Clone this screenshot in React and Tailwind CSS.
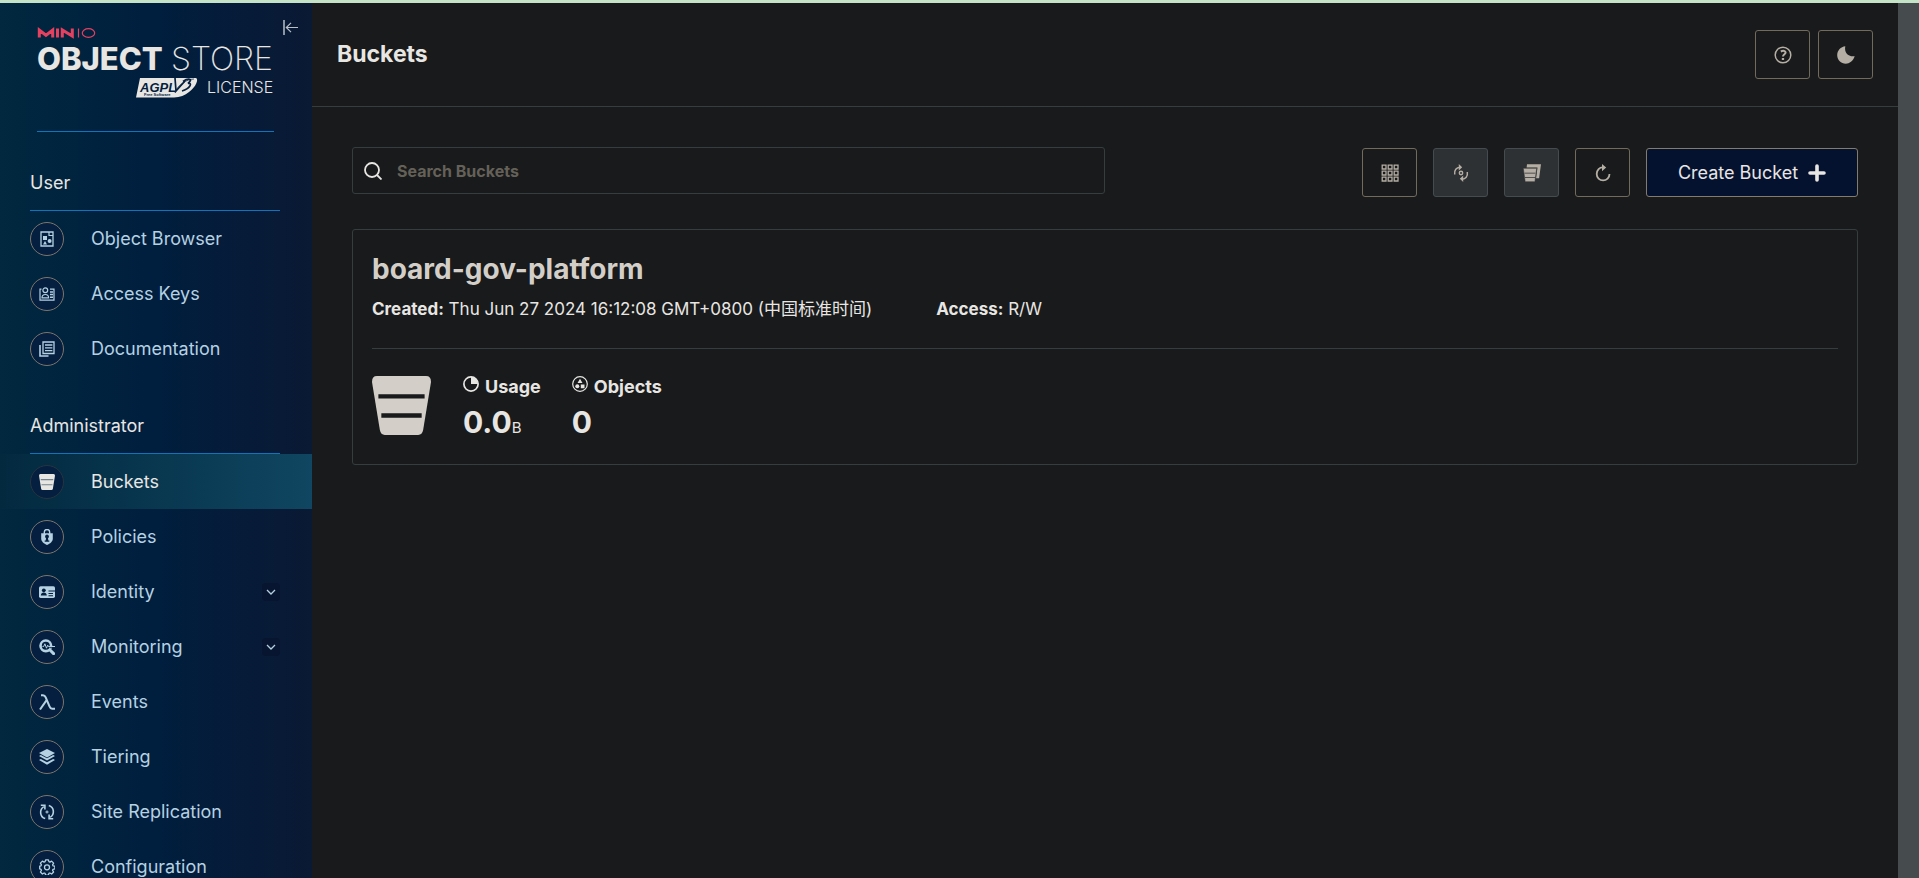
import React from "react";

const ObjectBrowserIcon = () => (
  <svg viewBox="0 0 16 16" className="size-4" fill="none" stroke="currentColor">
    <path d="M2 1h12v14H2z" strokeWidth="1.3" />
    <path d="M10 1v3.5h4" strokeWidth="1.2" />
    <path d="M4 5h4v4H4zM4 13.5l2-3.5 2 3.5z" fill="currentColor" stroke="none" />
    <circle cx="10.6" cy="10" r="2" fill="currentColor" stroke="none" />
  </svg>
);

const AccessKeysIcon = () => (
  <svg viewBox="0 0 16 16" className="size-4" fill="none" stroke="currentColor" strokeWidth="1.2">
    <path d="M2.5 3.2H1v11h14v-11h-4" />
    <circle cx="6.3" cy="4.3" r="2.4" />
    <path d="M3 11.8c0-4.4 6.6-4.4 6.6 0z" />
    <path d="M11 6h3M11 8.5h3M11 11.3h3" strokeWidth="1.5" />
  </svg>
);

const DocumentationIcon = () => (
  <svg viewBox="0 0 16 16" className="size-4" fill="none" stroke="currentColor" strokeWidth="1.3">
    <path d="M4 1h11v11.5H4z" />
    <path d="M1 4v11h8.5" strokeWidth="1.6" />
    <path d="M6 4h7.4M6 6.8h7.4M6 9.6h7.4" />
  </svg>
);

const BucketIcon = ({ className = "size-4", band = "#72858f" }) => (
  <svg viewBox="0 0 60 60" className={className} fill="currentColor">
    <path d="M5 0h50q5 0 5 6l-8 49q-1 5-5 5H13q-4 0-5-5L0 6q0-6 5-6z" />
    <path d="M6.5 18.5h47v4.5h-47zM9.500 38h41v4.500h-41z" fill={band} />
  </svg>
);

const PoliciesIcon = () => (
  <svg viewBox="0 0 16 16" className="size-4">
    <path d="M5.300 5V3.200a2.700 2.700 0 0 1 5.400 0V5" fill="none" stroke="currentColor" strokeWidth="1.4" />
    <path d="M2.200 4.200h11.600v5.600c0 2.800-2.800 4.900-5.800 6.200-3-1.300-5.800-3.400-5.800-6.200z" fill="currentColor" />
    <path d="M8 5.600a2 2 0 0 1 1 3.700l.3 2.200h1v1.300H5.700v-1.300h1L7 9.300a2 2 0 0 1 1-3.700z" fill="#051f40" />
  </svg>
);

const IdentityIcon = () => (
  <svg viewBox="0 0 16 16" className="size-4">
    <rect x="0" y="2.300" width="16" height="11.600" rx="1.600" fill="currentColor" />
    <circle cx="4.800" cy="6.300" r="1.900" fill="#051f40" />
    <path d="M1.800 11.500c0-4 6-4 6 0zM9.500 6.500H16v1H9.500zM9.500 9H14v1H9.500zM9.500 11.300H14v1H9.500z" fill="#051f40" />
  </svg>
);

const MonitoringIcon = () => (
  <svg viewBox="0 0 16 16" className="size-4" fill="none">
    <circle cx="6.800" cy="6.800" r="5.300" stroke="currentColor" strokeWidth="2.600" />
    <path d="M11 11l3.600 3.600" stroke="currentColor" strokeWidth="3" strokeLinecap="round" />
    <path d="M3.500 7.500h1.200l1.200-2.700 1.600 4.400 1.200-3 .7 1.300H16" stroke="currentColor" strokeWidth="1" />
    <path d="M10.500 8.700H16" stroke="#051f40" strokeWidth="0.900" />
  </svg>
);

const EventsIcon = () => (
  <svg viewBox="0 0 16 16" className="size-4" fill="none" stroke="currentColor" strokeWidth="2">
    <path d="M2 1.200h2c1.500 0 2.100.7 2.700 2.200l3.800 9c.6 1.600 1.200 2.300 2.600 2.300H16M7.600 6.200L1 15.500" />
  </svg>
);

const TieringIcon = () => (
  <svg viewBox="0 0 16 16" className="size-4" fill="currentColor">
    <path d="M8 0l8 4-8 4.500L0 4z" />
    <path d="M0 7l1.800-1L8 9.300 14.200 6l1.800 1-8 4.500zM0 11l1.800-1L8 13.300l6.200-3.300 1.800 1-8 4.700z" />
  </svg>
);

const ReplicationIcon = () => (
  <svg viewBox="0 0 16 16" className="size-4" fill="none" stroke="currentColor" strokeWidth="1.600">
    <path d="M6.200 14.600C.6 13 .2 5.500 4.800 2.600M1.800 1.300h4.100v4.200M9.800 1.400c5.600 1.600 6 9.100 1.400 12M14.200 14.700h-4.100v-4.200" />
    <path d="M8 6.400v3.200M6.400 8h3.200" strokeWidth="1.100" />
  </svg>
);

const GearIcon = () => (
  <svg viewBox="0 0 16 16" className="size-4" fill="none" stroke="currentColor" strokeWidth="1.300" strokeLinejoin="round">
    <path d="M6.600.8h2.800l.5 1.900 1 .4 1.700-1 2 2-1 1.700.4 1 1.900.4v2.600l-1.900.5-.4 1 1 1.700-2 2-1.700-1-1 .4-.5 1.800H6.600l-.5-1.800-1-.4-1.700 1-2-2 1-1.700-.4-1L.7 9.800V7.200L2 6.800l.4-1-1-1.700 2-2 1.700 1 1-.4z" />
    <circle cx="8" cy="8.300" r="2.500" />
  </svg>
);

const ChevronDown = () => (
  <svg viewBox="0 0 18 18" className="size-[18px]" fill="none" stroke="#b5cfdf" strokeWidth="1.300">
    <path d="M5 7l4 4 4-4" />
  </svg>
);

const userItems = [
  { label: "Object Browser", Icon: ObjectBrowserIcon },
  { label: "Access Keys", Icon: AccessKeysIcon },
  { label: "Documentation", Icon: DocumentationIcon },
];

const adminItems = [
  { label: "Buckets", Icon: BucketIcon, active: true },
  { label: "Policies", Icon: PoliciesIcon },
  { label: "Identity", Icon: IdentityIcon, expandable: true },
  { label: "Monitoring", Icon: MonitoringIcon, expandable: true },
  { label: "Events", Icon: EventsIcon },
  { label: "Tiering", Icon: TieringIcon },
  { label: "Site Replication", Icon: ReplicationIcon },
  { label: "Configuration", Icon: GearIcon },
];

function NavItem({ label, Icon, active, expandable }) {
  return (
    <li>
      <a
        href="#"
        aria-current={active ? "page" : undefined}
        className={
          "flex h-[55px] items-center pr-8 pl-[30px] text-[18px] " +
          (active
            ? "bg-linear-to-r from-[#03293f] to-[#104661] text-[#e8e6e3]"
            : "text-[#b5d1e2]")
        }
      >
        <span
          className={
            "flex size-[34px] shrink-0 items-center justify-center rounded-full border bg-[#051f40] " +
            (active ? "border-[#27343f]" : "border-[#7d756a]")
          }
        >
          <Icon />
        </span>
        <span className="ml-[27px] grow">{label}</span>
        {expandable && (
          <span className="rounded-sm bg-[#071530]">
            <ChevronDown />
          </span>
        )}
      </a>
    </li>
  );
}

function NavGroup({ title, items }) {
  return (
    <section>
      <h2 className="mr-8 ml-[30px] flex h-[78px] items-end border-b border-[#1273bd] pb-[15px] text-[18px] leading-6 text-[#e8e6e3]">
        {title}
      </h2>
      <ul>
        {items.map((item) => (
          <NavItem key={item.label} {...item} />
        ))}
      </ul>
    </section>
  );
}

function Logo() {
  return (
    <svg viewBox="0 0 238 74" className="h-[74px] w-[238px] overflow-visible" fill="#e8e6e3" role="img" aria-label="MinIO Object Store, AGPL v3 license">
      <g fill="none" stroke="#e5405f">
        <path d="M2.300 12.500V5L9 10.300 15.700 5v7.500M20.500 3.500v9M25.300 12.500V5l10 6V3.500" strokeWidth="3" />
        <path d="M41.500 3.500v9" strokeWidth="1.200" />
        <ellipse cx="51.500" cy="8" rx="6.200" ry="4.400" strokeWidth="1.200" />
      </g>
      <text x="0" y="45" fontFamily="Inter" fontWeight="800" fontSize="31">OBJECT</text>
      <text x="134" y="45" fontFamily="Inter" fontWeight="200" fontSize="32">STORE</text>
      <text x="170" y="68" fontFamily="Inter" fontWeight="300" fontSize="16">LICENSE</text>
      <path d="M103 53h56c3 1 0 9-7 14-4 3-9 5.500-15 5.500H99z" />
      <g fill="#041f3f">
        <text x="103" y="67" fontFamily="Liberation Sans" fontStyle="italic" fontWeight="700" fontSize="13">AGPL</text>
        <text x="107" y="71" fontFamily="Liberation Sans" fontWeight="700" fontSize="4">Free Software</text>
      </g>
      <g fill="none" stroke="#041f3f">
        <path d="M138 53l1 13 9-10" strokeWidth="1.700" />
        <path d="M146 56.500c5-3.500 11-3 5 2 5-1 2 5-6 7.500" strokeWidth="1.700" />
        <path d="M157 54c-7 0-17 6-19 14" strokeWidth="0.700" />
      </g>
    </svg>
  );
}

function Sidebar() {
  return (
    <aside className="w-[312px] shrink-0 overflow-hidden bg-linear-to-r from-[#01283f] via-[#001e3e] to-[#0a1934]">
      <div className="flex h-[130px] pb-px">
        <div className="ml-[37px] flex w-[237px] flex-col border-b border-[#1273bd] pt-[22px]">
          <Logo />
        </div>
        <button type="button" aria-label="Collapse menu" className="mt-4 ml-2 size-4 text-[#b9c0c8]">
          <svg viewBox="0 0 16 16" className="size-4" fill="none" stroke="currentColor">
            <path d="M2 1v15" strokeWidth="1.500" />
            <path d="M16 8.500H4.500M9 3.800L4.300 8.500 9 13.200" strokeWidth="1.200" />
          </svg>
        </button>
      </div>
      <nav>
        <NavGroup title="User" items={userItems} />
        <NavGroup title="Administrator" items={adminItems} />
      </nav>
    </aside>
  );
}

function IconButton({ label, disabled, children }) {
  return (
    <button
      type="button"
      aria-label={label}
      disabled={disabled}
      className={
        "flex h-[49px] w-[55px] items-center justify-center rounded-[3px] border text-[#b5aea4] " +
        (disabled ? "border-[#454c50] bg-[#2d3133]" : "border-[#736a5c]")
      }
    >
      {children}
    </button>
  );
}

const HelpIcon = () => (
  <svg viewBox="0 0 18 18" className="size-[18px]" fill="none" stroke="currentColor">
    <circle cx="9" cy="9" r="7.800" strokeWidth="1.500" />
    <path d="M6.800 5.500c2.600-1.300 4.800-.6 4.800 1 0 1.800-2.600 1.700-2.600 4" strokeWidth="2" />
    <path d="M7.800 12h2.300v2H7.800z" fill="currentColor" stroke="none" />
  </svg>
);

const MoonIcon = () => (
  <svg viewBox="0 0 18 18" className="size-[18px]" fill="currentColor">
    <path d="M8.300.3C7 6.500 11 11 17.700 10.300 16 15 12.500 17.700 8.800 17.700 4 17.700.2 14 .2 9.200.2 4.500 3.800.7 8.300.3z" />
  </svg>
);

const GridIcon = () => (
  <svg viewBox="0 0 18 18" className="size-[18px]" fill="none" stroke="currentColor" strokeWidth="1.300">
    <path d="M1.200 1.200H5V5H1.200zM7.200 1.200H11V5H7.200zM13.200 1.200H17V5h-3.800zM1.200 7.200H5V11H1.200zM7.200 7.200H11V11H7.200zM13.200 7.200H17V11h-3.800zM1.200 13.200H5V17H1.200zM7.200 13.200H11V17H7.200zM13.200 13.200H17V17h-3.800z" />
  </svg>
);

const LifecycleIcon = () => (
  <svg viewBox="0 0 18 18" className="size-[18px]" fill="none" stroke="currentColor" strokeWidth="1.500">
    <path d="M2.700 10.500C2 6 4.500 3.600 8 3.300M15.300 8c.7 4.500-1.800 6.900-5.300 7.200" />
    <path d="M6.800 0l3.400 3.300-3.400 3.200zM11.200 11.500L7.800 14.800l3.400 3.200z" fill="currentColor" stroke="none" />
    <circle cx="9" cy="9" r="1.700" strokeWidth="1.400" />
  </svg>
);

const MultiBucketIcon = () => (
  <svg viewBox="0 0 18 18" className="size-[18px]" fill="currentColor">
    <path d="M4 .3h14l-1.900 14h-3L14.500 3.500H3.600z" />
    <path d="M.3 4.300h13.400l-1.800 13.400H2.200z" stroke="#2d3133" strokeWidth="0.500" />
    <path d="M1.500 8.700h11v.8h-11zM2 13.200h10v.8H2z" fill="#2d3133" />
  </svg>
);

const RefreshIcon = () => (
  <svg viewBox="0 0 18 18" className="size-[18px]" fill="none" stroke="currentColor" strokeWidth="1.800">
    <path d="M9.500 3.500C5.500 3 2.700 6.200 2.700 10a6.400 6.400 0 0 0 12.800 0" />
    <path d="M8 0l4.200 3.600L8 7.200z" fill="currentColor" stroke="none" />
  </svg>
);

const UsageIcon = () => (
  <svg viewBox="0 0 16 16" className="size-4" fill="none" stroke="currentColor">
    <circle cx="8" cy="8" r="7.100" strokeWidth="1.700" />
    <path d="M8 1v7h7a7 7 0 0 0-7-7z" fill="currentColor" stroke="none" />
  </svg>
);

const ObjectsIcon = () => (
  <svg viewBox="0 0 16 16" className="size-4" fill="currentColor">
    <circle cx="8" cy="8" r="7.300" fill="none" stroke="currentColor" strokeWidth="1.200" />
    <path d="M8 2.800l2.500 4.200h-5zM8.800 8.500h3.700v3.700H8.800z" />
    <circle cx="5.300" cy="10.200" r="2" />
  </svg>
);

function BucketCard() {
  return (
    <article className="mt-8 rounded-[3px] border border-[#373c3f] px-[19px] pt-[19px] pb-5 text-[#e8e6e3]">
      <h2 className="text-[28px] leading-10 font-bold text-[#d3cfc8]">board-gov-platform</h2>
      <div className="mt-2 flex gap-16 text-[17px] leading-6">
        <p>
          <b>Created:</b> Thu Jun 27 2024 16:12:08 GMT+0800 (中国标准时间)
        </p>
        <p>
          <b>Access:</b> R/W
        </p>
      </div>
      <div className="mt-[27px] flex border-t border-[#373c3f] pt-[27px]">
        <BucketIcon className="size-[59px] text-[#d3cfc8]" band="#181a1b" />
        <dl className="ml-8 flex gap-[31px]">
          <div>
            <dt className="flex gap-1.5 text-[18px] leading-[22px] font-bold">
              <UsageIcon />
              Usage
            </dt>
            <dd className="mt-2 flex items-baseline text-[30px] leading-8 font-bold">
              0.0<span className="text-[15px] font-normal">B</span>
            </dd>
          </div>
          <div>
            <dt className="flex gap-1.5 text-[18px] leading-[22px] font-bold">
              <ObjectsIcon />
              Objects
            </dt>
            <dd className="mt-2 text-[30px] leading-8 font-bold">0</dd>
          </div>
        </dl>
      </div>
    </article>
  );
}

export default function App() {
  return (
    <div className="flex h-screen flex-col overflow-hidden border-t-3 border-[#c5e3c7] bg-[#181a1b] font-['Inter','Noto_Sans_CJK_SC',sans-serif]">
      <div className="flex min-h-0 grow">
        <Sidebar />
        <main className="min-w-0 grow">
          <header className="flex h-[104px] items-center justify-between border-b border-[#373c3f] px-[25px]">
            <h1 className="text-[23px] font-bold text-[#e8e6e3]">Buckets</h1>
            <div className="flex gap-2">
              <IconButton label="Help">
                <HelpIcon />
              </IconButton>
              <IconButton label="Toggle dark mode">
                <MoonIcon />
              </IconButton>
            </div>
          </header>
          <div className="px-10 pt-10">
            <div className="flex min-h-[50px] justify-between">
              <label className="flex h-[47px] w-1/2 items-center gap-[15px] rounded-[3px] border border-[#373c3f] pl-[11px]">
                <svg viewBox="0 0 18 18" className="size-[18px] shrink-0" fill="none" stroke="#e8e6e3" strokeWidth="1.800">
                  <circle cx="8" cy="8" r="7" />
                  <path d="M13 13l4.500 4.500" />
                </svg>
                <input
                  type="search"
                  aria-label="Search Buckets"
                  placeholder="Search Buckets"
                  className="h-full min-w-0 grow bg-transparent text-[16px] font-bold text-[#e8e6e3] outline-none placeholder:text-[#656159]"
                />
              </label>
              <div className="flex gap-4 self-end">
                <IconButton label="Select multiple">
                  <GridIcon />
                </IconButton>
                <IconButton label="Set lifecycle" disabled>
                  <LifecycleIcon />
                </IconButton>
                <IconButton label="Set replication" disabled>
                  <MultiBucketIcon />
                </IconButton>
                <IconButton label="Refresh">
                  <RefreshIcon />
                </IconButton>
                <button
                  type="button"
                  className="flex h-[49px] w-[212px] items-center justify-center gap-2.5 rounded-[3px] border border-[#857b6b] bg-[#05122f] text-[18px] text-[#e8e6e3]"
                >
                  Create Bucket
                  <svg viewBox="0 0 18 18" className="size-[18px]" fill="none" stroke="currentColor" strokeWidth="3.600" strokeLinecap="round">
                    <path d="M9 2v14M2 9h14" />
                  </svg>
                </button>
              </div>
            </div>
            <BucketCard />
          </div>
        </main>
        <div className="w-[21px] shrink-0 bg-[#464b4d]" />
      </div>
    </div>
  );
}
